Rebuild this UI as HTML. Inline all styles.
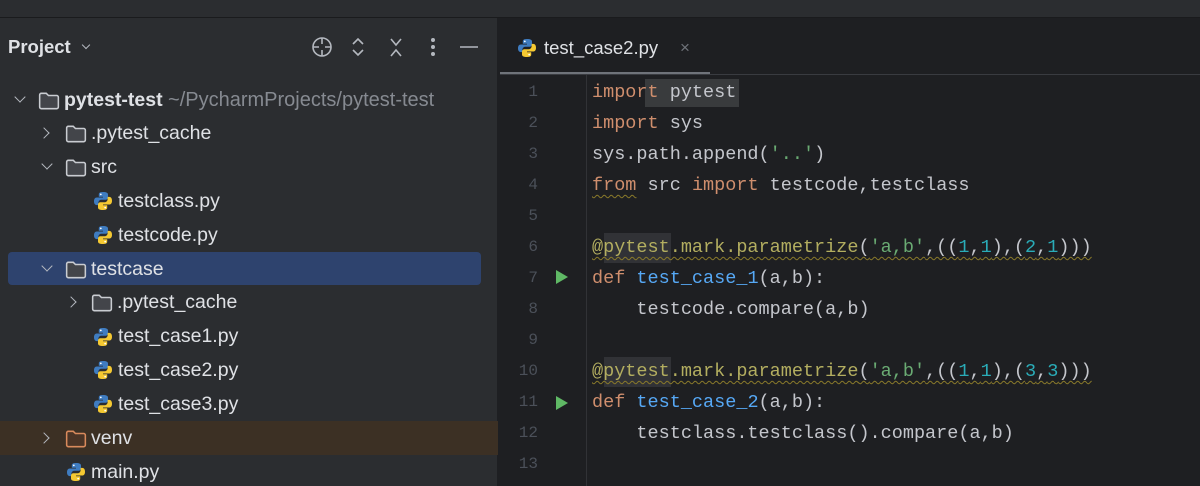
<!DOCTYPE html>
<html><head><meta charset="utf-8"><style>
*{margin:0;padding:0;box-sizing:border-box}
body{width:1200px;height:486px;overflow:hidden;background:#1e1f22;font-family:"Liberation Sans",sans-serif;position:relative;color:#dfe1e5}
.top{position:absolute;left:0;top:0;width:1200px;height:18px;background:#2b2d30;border-bottom:1px solid #1a1b1d}
.side{position:absolute;left:0;top:18px;width:498px;height:468px;background:#2b2d30;border-right:1px solid #1e1f22}
.t{position:absolute;font-size:19.5px;white-space:nowrap;line-height:24px}
.sel{position:absolute;left:8px;top:252px;width:473px;height:33px;background:#2e436e;border-radius:4px}
.venv{position:absolute;left:0;top:421px;width:498px;height:34px;background:#3c3024}
.chev{position:absolute;width:8px;height:8px;border-right:1.6px solid #b4b8bf;border-bottom:1.6px solid #b4b8bf}
.down{transform:rotate(45deg)}
.right{transform:rotate(-45deg)}
.code{position:absolute;left:592px;font-family:"Liberation Mono",monospace;font-size:18.5px;white-space:pre;color:#c4c6cc;line-height:24px}
.ln{position:absolute;width:40px;text-align:right;left:498px;font-family:"Liberation Mono",monospace;font-size:16px;color:#4b5059}
.k{color:#cf8e6d}.f{color:#56a8f5}.s{color:#6aab73}.n{color:#2aacb8}.d{color:#b3ae60}
.w{text-decoration:underline wavy #8a7a2a;text-underline-offset:4px;text-decoration-thickness:1px}
.run{position:absolute;left:556px;width:0;height:0;border-left:12px solid #5fb865;border-top:7px solid transparent;border-bottom:7px solid transparent}
</style></head><body>
<div class="top"></div>
<div class="side"></div>
<div class="t" style="left:8px;top:35px;font-weight:bold;color:#dfe1e5;font-size:18.5px">Project</div>
<div class="chev down" style="left:83px;top:42px;width:6px;height:6px"></div>
<svg style="position:absolute;left:310px;top:35px" width="170" height="26" viewBox="0 0 170 26" fill="none" stroke="#b4b8bf" stroke-width="1.6">
<circle cx="12" cy="12" r="9"/><path d="M12 3v6M12 15v6M3 12h6M15 12h6"/>
<path d="M43 9l5-5 5 5M43 15l5 5 5-5"/>
<path d="M81 4l5 6 5-6M81 21l5-6 5 6"/>
<circle cx="123" cy="5" r="1.2" fill="#b4b8bf"/><circle cx="123" cy="12" r="1.2" fill="#b4b8bf"/><circle cx="123" cy="19" r="1.2" fill="#b4b8bf"/>
<path d="M150 12h18"/>
</svg>
<div class="sel"></div>
<div class="venv"></div>
<svg width="0" height="0" style="position:absolute"><defs>
<symbol id="fo" viewBox="0 0 20 18"><path d="M1.5 3.5a1.5 1.5 0 0 1 1.5-1.5h4.5l2 2h7.5a1.5 1.5 0 0 1 1.5 1.5v9a1.5 1.5 0 0 1-1.5 1.5h-14a1.5 1.5 0 0 1-1.5-1.5z" fill="#43454a" stroke="#c9ccd1" stroke-width="1.4"/></symbol>
<symbol id="fv" viewBox="0 0 20 18"><path d="M1.5 3.5a1.5 1.5 0 0 1 1.5-1.5h4.5l2 2h7.5a1.5 1.5 0 0 1 1.5 1.5v9a1.5 1.5 0 0 1-1.5 1.5h-14a1.5 1.5 0 0 1-1.5-1.5z" fill="#4a3426" stroke="#d98a5c" stroke-width="1.4"/></symbol>
<symbol id="py" viewBox="0 0 20 20"><path d="M9.8 1c-4 0-4 1.7-4 2.5v2.2h4.2v.8H3.8C2 6.5 1 8 1 10.3s1 3.8 2.8 3.8h1.6v-2.3c0-1.700 1.4-3 3-3h4.2c1.4 0 2.4-1.1 2.4-2.5V3.5C15 2 13.7 1 9.8 1z" fill="#3f7cc0"/><circle cx="7.8" cy="3.4" r=".9" fill="#fff"/><path d="M10.2 19c4 0 4-1.7 4-2.5v-2.2H10v-.8h6.2c1.8 0 2.8-1.5 2.8-3.8s-1-3.8-2.8-3.8h-1.6v2.3c0 1.7-1.4 3-3 3H7.4C6 11.2 5 12.3 5 13.7v2.8C5 18 6.3 19 10.2 19z" fill="#f5c932"/><circle cx="12.2" cy="16.6" r=".9" fill="#fff"/></symbol>
</defs></svg>
<div class="chev down" style="left:16px;top:93px"></div>
<svg style="position:absolute;left:38px;top:91px" width="22" height="20"><use href="#fo"/></svg>
<div class="t" style="left:64px;top:88px;font-weight:bold">pytest-test <span style="font-weight:normal;color:#868a91;font-size:20px">~/PycharmProjects/pytest-test</span></div>

<div class="chev right" style="left:40px;top:129px"></div>
<svg style="position:absolute;left:65px;top:124px" width="22" height="20"><use href="#fo"/></svg>
<div class="t" style="left:91px;top:121px">.pytest_cache</div>

<div class="chev down" style="left:43px;top:160px"></div>
<svg style="position:absolute;left:65px;top:158px" width="22" height="20"><use href="#fo"/></svg>
<div class="t" style="left:91px;top:155px">src</div>

<svg style="position:absolute;left:93px;top:191px" width="20" height="20"><use href="#py"/></svg>
<div class="t" style="left:118px;top:189px">testclass.py</div>
<svg style="position:absolute;left:93px;top:225px" width="20" height="20"><use href="#py"/></svg>
<div class="t" style="left:118px;top:223px">testcode.py</div>

<div class="chev down" style="left:43px;top:262px"></div>
<svg style="position:absolute;left:65px;top:260px" width="22" height="20"><use href="#fo"/></svg>
<div class="t" style="left:91px;top:257px">testcase</div>

<div class="chev right" style="left:67px;top:298px"></div>
<svg style="position:absolute;left:91px;top:293px" width="22" height="20"><use href="#fo"/></svg>
<div class="t" style="left:117px;top:290px">.pytest_cache</div>

<svg style="position:absolute;left:93px;top:327px" width="20" height="20"><use href="#py"/></svg>
<div class="t" style="left:118px;top:324px">test_case1.py</div>
<svg style="position:absolute;left:93px;top:360px" width="20" height="20"><use href="#py"/></svg>
<div class="t" style="left:118px;top:358px">test_case2.py</div>
<svg style="position:absolute;left:93px;top:394px" width="20" height="20"><use href="#py"/></svg>
<div class="t" style="left:118px;top:392px">test_case3.py</div>

<div class="chev right" style="left:40px;top:434px"></div>
<svg style="position:absolute;left:65px;top:429px" width="22" height="20"><use href="#fv"/></svg>
<div class="t" style="left:91px;top:426px">venv</div>

<svg style="position:absolute;left:66px;top:462px" width="20" height="20"><use href="#py"/></svg>
<div class="t" style="left:91px;top:460px">main.py</div>

<svg style="position:absolute;left:517px;top:38px" width="20" height="20"><use href="#py"/></svg>
<div class="t" style="left:544px;top:36px;font-size:18.5px">test_case2.py</div>
<div class="t" style="left:680px;top:36px;color:#6f737a;font-size:17px">×</div>
<div style="position:absolute;left:500px;top:72px;width:210px;height:3px;background:#6f737a"></div>
<div style="position:absolute;left:500px;top:74px;width:700px;height:1px;background:#393b40"></div>
<div style="position:absolute;left:586px;top:75px;width:1px;height:411px;background:#313236"></div>

<div class="ln" style="top:83px">1</div>
<div class="ln" style="top:114px">2</div>
<div class="ln" style="top:145px">3</div>
<div class="ln" style="top:176px">4</div>
<div class="ln" style="top:207px">5</div>
<div class="ln" style="top:238px">6</div>
<div class="ln" style="top:269px">7</div>
<div class="ln" style="top:300px">8</div>
<div class="ln" style="top:331px">9</div>
<div class="ln" style="top:362px">10</div>
<div class="ln" style="top:393px">11</div>
<div class="ln" style="top:424px">12</div>
<div class="ln" style="top:455px">13</div>
<div class="run" style="top:270px"></div>
<div class="run" style="top:396px"></div>

<div style="position:absolute;left:645px;top:79px;width:94px;height:28px;background:#393b3d"></div>
<div style="position:absolute;left:604px;top:233px;width:67px;height:30px;background:#313236"></div>
<div style="position:absolute;left:604px;top:357px;width:67px;height:30px;background:#313236"></div>

<div class="code" style="top:81px"><span class="k">import</span> pytest</div>
<div class="code" style="top:112px"><span class="k">import</span> sys</div>
<div class="code" style="top:143px">sys.path.append(<span class="s">'..'</span>)</div>
<div class="code" style="top:174px"><span class="k w">from</span> src <span class="k">import</span> testcode,testclass</div>
<div class="code w" style="top:236px"><span class="d">@pytest.mark.parametrize</span>(<span class="s">'a,b'</span>,((<span class="n">1</span>,<span class="n">1</span>),(<span class="n">2</span>,<span class="n">1</span>)))</div>
<div class="code" style="top:267px"><span class="k">def</span> <span class="f">test_case_1</span>(a,b):</div>
<div class="code" style="top:298px">    testcode.compare(a,b)</div>
<div class="code w" style="top:360px"><span class="d">@pytest.mark.parametrize</span>(<span class="s">'a,b'</span>,((<span class="n">1</span>,<span class="n">1</span>),(<span class="n">3</span>,<span class="n">3</span>)))</div>
<div class="code" style="top:391px"><span class="k">def</span> <span class="f">test_case_2</span>(a,b):</div>
<div class="code" style="top:422px">    testclass.testclass().compare(a,b)</div>
</body></html>
